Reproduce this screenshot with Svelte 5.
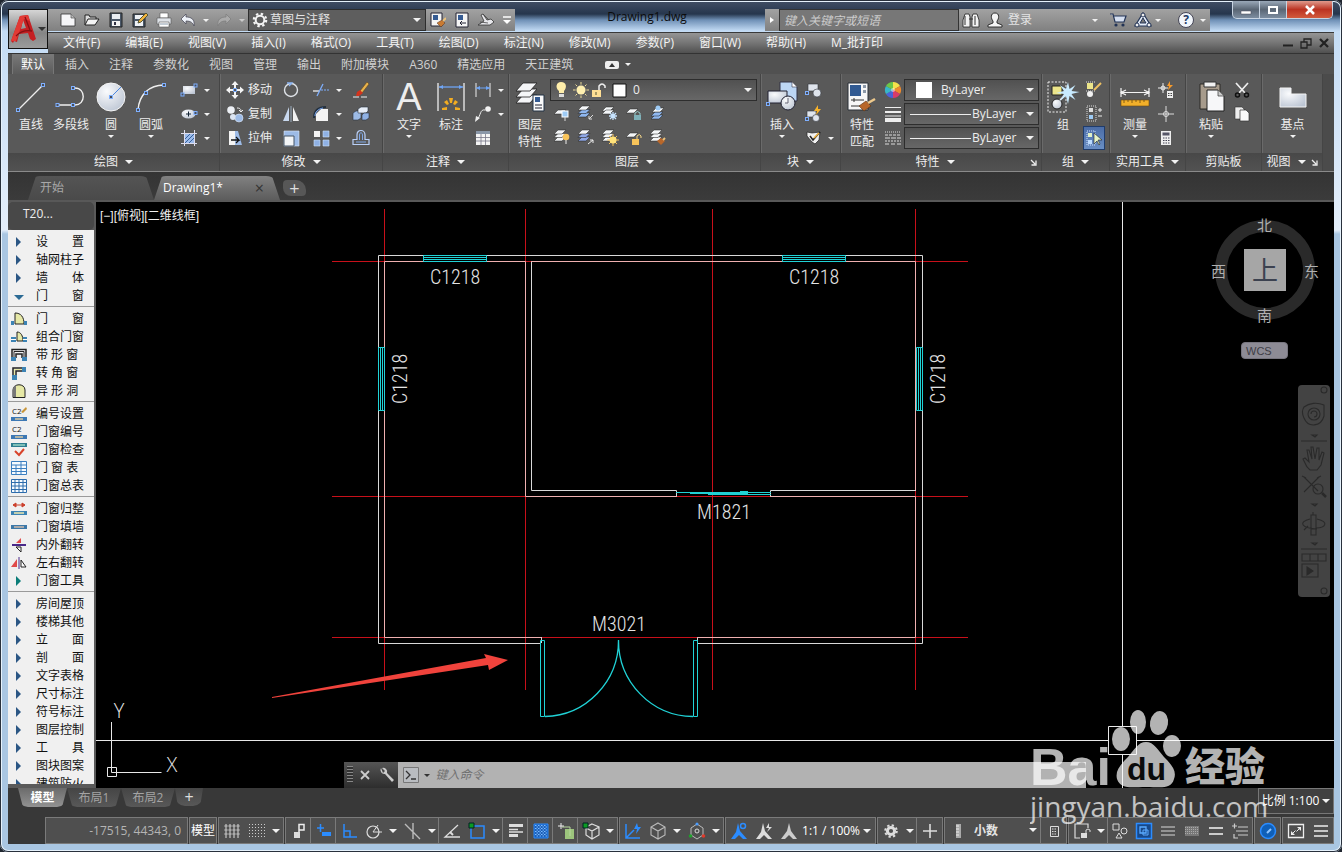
<script lang="ts">
	type Icon = [number, number, string];
	type StatusItem = {
		icon?: string;
		label?: string;
		text?: string;
		arrow?: boolean;
		units?: boolean;
		on?: boolean;
		sep?: boolean;
		tight?: boolean;
	};

	const sheet = (x: number, y: number, fill = '#f4f6f8') =>
		`<path d="M${x + 4} ${y}h8l-4 4h-8z" fill="${fill}" stroke="#222" stroke-width=".5"/>`;
	const stack = (fill = '#f4f6f8') => sheet(1, 9, fill) + sheet(1, 5.5, fill) + sheet(1, 2);
	const node = (x: number, y: number) =>
		`<rect x="${x - 1.5}" y="${y - 1.5}" width="3" height="3" fill="#4b4f58" stroke="#7fb0ff"/>`;
	const pale = 'fill="#dfe4ec" stroke="#30343a" stroke-width=".6"';

	const icons: Record<string, Icon> = {
		newfile: [16, 16, '<path d="M1 2h10l4 4v8H1z" fill="#f6f6f8" stroke="#333" stroke-width=".8"/><path d="M11 2v4h4" fill="#bbb" stroke="#555" stroke-width=".7"/>'],
		open: [16, 16, '<path d="M1 13V3h4l1 2h6v3" fill="#ddd" stroke="#222"/><path d="M1 13l3-6h11l-4 6z" fill="#f4f4f4" stroke="#222"/>'],
		save: [16, 16, '<path d="M2 1h12v14H2z" fill="#4b5869" stroke="#222"/><path d="M4 2h8v5H4z" fill="#e9edf2"/><path d="M4 9h8v5H4z" fill="#f4f4f4"/><path d="M6 10h2v3H6z" fill="#334"/>'],
		saveas: [16, 16, '<path d="M1 2h12v13H1z" fill="#4b5869" stroke="#222"/><path d="M3 3h8v4H3zM3 9h8v5H3z" fill="#eef1f5"/><path d="M6 11l1-3 7-7 2 2-7 7z" fill="#f2b43c" stroke="#553"/>'],
		print: [16, 16, '<path d="M4 1h8v5H4z" fill="#fff" stroke="#555" stroke-width=".6"/><path d="M1 6h14v6H1z" fill="#dfe3e8" stroke="#555" stroke-width=".6"/><path d="M3 10h10v5H3z" fill="#fff" stroke="#555" stroke-width=".6"/><path d="M4 12h8" stroke="#89a"/>'],
		undo: [16, 16, '<path d="M1 7l5-5v3c5 0 9 2 8 9-1-3-3-5-8-5v3z" fill="#eef2f8" stroke="#445" stroke-width=".7"/>'],
		redo: [16, 16, '<path d="M15 7l-5-5v3c-5 0-9 2-8 9 1-3 3-5 8-5v3z" fill="#aaa" stroke="#7b7b7b" stroke-width=".7"/>'],
		gear: [16, 16, '<circle cx="8" cy="8" r="4.3" fill="none" stroke="#f4f4f4" stroke-width="2"/><circle cx="8" cy="8" r="6.2" fill="none" stroke="#f4f4f4" stroke-width="2.2" stroke-dasharray="2.4 2.47"/>'],
		match: [16, 16, '<path d="M1 1h11v13H1z" fill="#f5f5f5" stroke="#223"/><path d="M3 3h5v5H3z" fill="#355b93"/><path d="M7 11l5-3 3 3-4 4z" fill="#c87a32" stroke="#532" stroke-width=".5"/><path d="M13 9l3-3" stroke="#ecc27a" stroke-width="2"/>'],
		sheetset: [16, 16, '<path d="M2 1h12v14H2z" fill="#f5f5f5" stroke="#223"/><path d="M4 3h5v5H4z" fill="#355b93"/><path d="M6 11h6M6 11l2-2M6 11l2 2" stroke="#223" fill="none"/>'],
		render: [18, 16, '<path d="M1 13h12l4-3-3-3-4 1-4-6-2 1 3 6z" fill="#e8e8ec" stroke="#333" stroke-width=".8"/><path d="M6 2l6 6M3 10l8 1" stroke="#444" stroke-width=".8"/>'],
		eject: [10, 10, '<path d="M1 2h8" stroke="#fff" stroke-width="1.5"/><path d="M1 5h8L5 9z" fill="#fff"/>'],
		binoculars: [18, 16, '<g fill="#f2f2f2" stroke="#222" stroke-width=".8"><path d="M3 2h4l1 3v10H1V8z"/><path d="M11 2h4l2 6v7h-7V5z"/></g><path d="M3 4v9M13 4v9M7 7h4" stroke="#333"/>'],
		user: [16, 16, '<path d="M8 1c5 0 4 6 2 8v2l5 2v2H1v-2l5-2V9C4 7 3 1 8 1z" fill="#f5f5f5" stroke="#222" stroke-width=".9"/>'],
		cart: [18, 16, '<path d="M1 2h3l2 8h9l2-6H5" fill="#d5dff0" stroke="#223355" stroke-width="1.2"/><circle cx="7" cy="13" r="1.6" fill="#223355"/><circle cx="14" cy="13" r="1.6" fill="#223355"/>'],
		a360: [18, 16, '<path d="M9 1l8 13H1z" fill="#e4ecf8" stroke="#223355" stroke-width="1.2"/><path d="M9 6l3 5H6z" fill="#777" stroke="#223355"/><circle cx="9" cy="3" r="2" fill="#eee" stroke="#223355"/><circle cx="3" cy="13" r="2" fill="#eee" stroke="#223355"/><circle cx="15" cy="13" r="2" fill="#eee" stroke="#223355"/>'],
		line: [32, 32, `<path d="M3 29L28 4" stroke="#eee" stroke-width="1.3"/>${node(3, 29)}${node(28, 4)}`],
		polyline: [32, 32, `<path d="M2 24h18c11 0 11-17 0-17" fill="none" stroke="#eee" stroke-width="1.4"/>${node(2.5, 24)}${node(18, 24)}${node(18, 7)}`],
		circle: [32, 32, `<circle cx="16" cy="16" r="14" fill="url(#ball)" stroke="#f4f4f4"/><path d="M16 16L26 6" stroke="#4a86e0"/>${node(16, 16)}`],
		arc: [32, 32, `<path d="M3 29C4 14 14 4 29 4" fill="none" stroke="#eee" stroke-width="1.4"/>${node(3, 29)}${node(11, 12)}${node(29, 4)}`],
		rect: [18, 16, `<path d="M3 4h12v8H3z" fill="url(#ball)"/>${node(2.5, 12.5)}${node(15.5, 3.5)}`],
		ellipse: [18, 16, `<ellipse cx="8.5" cy="8" rx="7" ry="4.5" fill="url(#ball)"/><path d="M6 8h5M8.5 5.5v5" stroke="#123"/>${node(15.5, 7)}`],
		hatch: [18, 18, '<path d="M5 5h9v9H5z" fill="#9dbcec"/><path d="M5 10l5-5M5 14l9-9M9 14l5-5" stroke="#35609c"/><path d="M1 4.5h16M1 14.5h16M4.5 1v16M14.5 1v16" stroke="#dde"/>'],
		move: [18, 18, '<g fill="#f4f4f4"><path d="M9 0l3.5 4h-2.5v3H8V4H5.5zM9 18l3.5-4h-2.5v-3H8v3H5.5zM0 9l4-3.5V8h3v2H4v2.5zM18 9l-4-3.5V8h-3v2h3v2.5z"/></g><path d="M7.5 7.5h3v3h-3z" fill="#555" stroke="#7fb0ff"/>'],
		copy: [18, 18, '<circle cx="5" cy="5" r="3.8" fill="#eef1f6"/><circle cx="7" cy="12" r="3" fill="#dbe4f2"/><circle cx="13" cy="13" r="4" fill="#9dbbe6" stroke="#dfe8f6" stroke-width=".6"/><path d="M11 3c4 0 4 2 4 4m-2-2l2 2 2-2" fill="none" stroke="#eee"/>'],
		stretch: [18, 18, '<path d="M3 2h6v14H3z" fill="#f4f4f4"/><path d="M9 2h3l4 14H9z" fill="#9dbbe6"/><path d="M5 11h8l-3-3m3 3l-3 3" fill="none" stroke="#111" stroke-width="1.3"/>'],
		rotate: [18, 18, '<circle cx="9" cy="9" r="6.5" fill="none" stroke="#dfe3e8" stroke-width="1.4"/><path d="M5 2l5 0-3 3" fill="none" stroke="#8ab4f2" stroke-width="1.3"/>'],
		mirror: [18, 18, '<path d="M7 2v14H1z" fill="#c8d8ee"/><path d="M11 2v14h6z" fill="#f1f1f1"/><path d="M9 1v16" stroke="#9ab"/>'],
		scale: [18, 18, '<path d="M2 2h15v15H2z" fill="#9dbbe6" stroke="#dde8f8" stroke-width=".6"/><path d="M2 7h10v10H2z" fill="#f2f4f6" stroke="#456"/>'],
		trim: [18, 18, '<path d="M1 10h6" stroke="#eee" stroke-width="1.3"/><path d="M9 9h8" stroke="#7fb0ff" stroke-dasharray="2 1"/><path d="M5 15L11 3" stroke="#7fb0ff" stroke-width="1.3"/>'],
		fillet: [18, 18, '<path d="M4 16V9l5-5h7v12z" fill="#f4f4f4"/><path d="M2 13C2 5 6 2 14 2" fill="none" stroke="#23303f" stroke-width="2"/><path d="M3 11c0-4 3-7 8-8" fill="none" stroke="#7fb0ff"/>'],
		array: [18, 18, '<path d="M2 2h6v6H2z" fill="#f4f4f4"/><path d="M11 2h6v6h-6zM2 11h6v6H2zM11 11h6v6h-6z" fill="#8fb1e4" stroke="#cfe0f8" stroke-width=".6"/>'],
		erase: [18, 18, '<path d="M1 16h16" stroke="#eee" stroke-dasharray="6 2"/><path d="M8 10l7-9 2 2-7 9z" fill="#e6b24c" stroke="#5a3a10" stroke-width=".5"/><path d="M4 15l1-4 3-2 3 3-4 3z" fill="#d4331c"/>'],
		explode: [18, 18, '<g stroke="#2a3442" stroke-width=".6"><path d="M1 8l3-2h5v7l-3 2H1z" fill="#9dbbe6"/><path d="M6 4l3-2h7v4l-2 2H6z" fill="#e6edf7"/><path d="M10 10l2-2h5v5l-3 2h-4z" fill="#8fb1e4"/></g>'],
		offset: [18, 18, '<path d="M1 15.5h16v-5h-4V6c0-6-8-6-8 0v4.500H1z" fill="none" stroke="#b9d0f8" stroke-width="1.2"/><path d="M4 13h10M7.500 11V6c0-3 3-3 3 0v5" fill="none" stroke="#7fa8e8"/>'],
		dimension: [32, 32, '<path d="M3 2v28M29 2v28" stroke="#eee" stroke-width="1.3"/><path d="M4 6h24" stroke="#6fa5f4" stroke-width="1.3"/><path d="M4 6l4-2v4zM28 6l-4-2v4z" fill="#6fa5f4"/><g fill="#f3ad22"><path d="M14 17h4l-1 5h-2z"/><path d="M9 21l3-2 2 4-2 1zM23 21l-3-2-2 4 2 1z"/><path d="M7 27l5-1v3H7zM25 27l-5-1v3h5z"/></g>'],
		linear: [18, 18, '<path d="M2 2v14M16 2v14" stroke="#eee"/><path d="M2 7h14" stroke="#6fa5f4"/><path d="M2 7l4-2v4zM16 7l-4-2v4z" fill="#6fa5f4"/>'],
		leader: [18, 18, '<circle cx="14" cy="4" r="2.8" fill="#f4f4f4"/><path d="M11 5C6 4 7 10 3 15" fill="none" stroke="#eee"/><path d="M1 17l1-6 4 2z" fill="#eee"/>'],
		table: [18, 18, '<path d="M2 2h14v14H2z" fill="#f4f4f4"/><path d="M2 2h14v3H2z" fill="#8a97a8"/><path d="M2 8.5h14M2 12h14M7 5v11M11.5 5v11" stroke="#778" stroke-width=".8"/>'],
		layerprops: [32, 32, '<g fill="#f5f6f8" stroke="#202020" stroke-width=".8"><path d="M9 14h14l-7 8H2z"/><path d="M9 8h14l-7 8H2z"/><path d="M9 2h14l-7 8H2z"/></g><path d="M19 14h11v16H19z" fill="#fafafa" stroke="#234"/><path d="M21 16h5v5h-5z" fill="#355b93"/><path d="M21 24h7M21 27h7" stroke="#223"/>'],
		lay1: [18, 18, sheet(1, 6) + '<rect x="9" y="7" width="6" height="6" fill="#9ecbf5" stroke="#fff"/><path d="M12 13v4" stroke="#ddd"/>'],
		lay2: [18, 18, stack('#8fb7ee') + '<path d="M16 11l-4 4m0-3v3h3" stroke="#ddd" fill="none"/>'],
		lay3: [18, 18, sheet(1, 3) + sheet(1, 6) + '<path d="M12 8v8M8 12h8M9 9l6 6M15 9l-6 6" stroke="#c7e4ff" stroke-width="1.3"/>'],
		lay4: [18, 18, sheet(1, 5) + '<path d="M9 11h7v5H9z" fill="#7eb0b8"/><path d="M10 11V9q2.5-3 5 0v2" fill="none" stroke="#9cc"/>'],
		lay5: [18, 18, sheet(2, 11, '#8fb7ee') + sheet(2, 8, '#8fb7ee') + sheet(3, 4) + '<circle cx="9" cy="4" r="2.5" fill="#9ecbf5"/>'],
		lay6: [18, 18, stack() + '<circle cx="13" cy="9" r="3.3" fill="#f8c45a"/><path d="M13 12v4" stroke="#eee"/>'],
		lay7: [18, 18, stack('#8fa7e6') + '<path d="M11 16l5-4m-3 0h3v3" stroke="#eee" fill="none"/>'],
		lay8: [18, 18, stack() + '<path d="M12 6v12M6 12h12M8 8l8 8M16 8l-8 8" stroke="#f8c45a"/><circle cx="12" cy="12" r="3.5" fill="#ffe27a"/>'],
		lay9: [18, 18, sheet(1, 5) + '<path d="M7 11h7v6H7z" fill="#f8c45a"/><path d="M12 11V8q2.5-3 4 0v2" fill="none" stroke="#f8d98a"/>'],
		lay10: [18, 18, stack() + '<path d="M8 13l4-3 4 3-4 4z" fill="#b8672a"/><path d="M14 12l2-2" stroke="#ecc27a" stroke-width="2"/>'],
		insert: [34, 34, '<path d="M15 2h12l5 5v14H15z" fill="#bcd6f4" stroke="#334"/><path d="M27 2v5h5" fill="#fff" stroke="#334" stroke-width=".6"/><path d="M3 11h19v12H3z" fill="url(#ball)" stroke="#223"/><circle cx="23" cy="23" r="7" fill="url(#ball)" stroke="#223"/><path d="M20 23h3v-5" fill="none" stroke="#667"/>' + node(3, 24)],
		block1: [18, 18, `<path d="M4 3h10v7H4z" ${pale}/><circle cx="13" cy="12" r="4" ${pale}/>${node(3, 12)}`],
		block2: [18, 18, `<path d="M3 6h9v6H3z" ${pale}/><circle cx="12" cy="13" r="3.5" ${pale}/><path d="M14 0l-4 6h3l-1 4 5-6h-3z" fill="#f8b32a"/>${node(3, 14)}`],
		block3: [18, 18, '<path d="M3 3l5 1 8-1-1 8-4 4-3-2-5-6z" fill="#f1f1f1" stroke="#222" stroke-width=".7"/><path d="M6 7l3 4 7-8" fill="none" stroke="#222" stroke-width="1.5"/><path d="M10 9l5-5" stroke="#f0b13a" stroke-width="1.5"/>'],
		matchprops: [32, 32, '<path d="M2 2h20v27H2z" fill="#f7f7f7" stroke="#2b3038"/><path d="M4 4h11v11H4z" fill="#315a92"/><path d="M17 4h3v3h-3zM17 9h3v3h-3z" fill="#8b98a8"/><path d="M5 19h13M5 25h9M8 17v4" stroke="#333"/><path d="M13 25l7-5 5 5-7 5z" fill="#b8672a" stroke="#5a3210" stroke-width=".6"/><path d="M22 22l7-4" stroke="#eec98c" stroke-width="2.5"/>'],
		colorwheel: [18, 18, '<path d="M9 9V1a8 8 0 0 1 7 4z" fill="#f6e24a"/><path d="M9 9l7-4a8 8 0 0 1 0 8z" fill="#ef8a2c"/><path d="M9 9l7 4a8 8 0 0 1-7 4z" fill="#d93b6a"/><path d="M9 9v8a8 8 0 0 1-7-4z" fill="#4a62d8"/><path d="M9 9l-7 4a8 8 0 0 1 0-8z" fill="#38b6c8"/><path d="M9 9L2 5a8 8 0 0 1 7-4z" fill="#6cc648"/><circle cx="9" cy="9" r="2" fill="#fff" opacity=".5"/>'],
		weights: [18, 18, '<path d="M1 2.5h16M1 11h16" stroke="#eee"/><path d="M1 7h16" stroke="#eee" stroke-width="2"/><path d="M1 15h16" stroke="#eee" stroke-width="4"/>'],
		dashes: [18, 18, '<path d="M1 3h16" stroke="#ddd" stroke-dasharray="1 1"/><path d="M1 6h16" stroke="#ddd" stroke-dasharray="3 1"/><path d="M1 9h16" stroke="#ddd" stroke-dasharray="5 1"/><path d="M1 12h16" stroke="#ddd" stroke-dasharray="2 1"/><path d="M1 15h16" stroke="#ddd" stroke-dasharray="4 2"/>'],
		group: [34, 34, '<path d="M2 2h18v30H2z" fill="none" stroke="#eee" stroke-dasharray="2 1.5"/><path d="M6 6h10v9H6z" fill="#ece58a" stroke="#222"/><circle cx="11" cy="24" r="5" fill="url(#ball)" stroke="#222"/><path d="M14 20l6-6" stroke="#eee" stroke-width="1.5"/><path d="M22 2l1.5 7 6-4-4 6 8 1-8 2 4 6-6-4-1.5 8-2-8-6 5 4-7-8-1 8-2-4-6 6 4z" fill="#c8ebff"/>'],
		groupedit: [18, 18, '<path d="M2 2h6v6H2z" fill="#ece58a"/><circle cx="5" cy="13" r="3" fill="#f2f2f2"/><path d="M1 1h9M1 10h9" stroke="#ddd" stroke-dasharray="1 1"/><path d="M9 9l7-7" stroke="#eec163" stroke-width="2"/>'],
		ungroup: [18, 18, '<path d="M2 1h9v15H2z" fill="none" stroke="#ddd" stroke-dasharray="1 1"/><path d="M4 3h4v4H4z" fill="#ddd"/><path d="M4 10h4v4H4z" fill="#9ecbf5"/><path d="M13 5h4M15 3v4M13 11h4" stroke="#eee"/>'],
		groupsel: [18, 18, '<path d="M2 2h8v14H2z" fill="none" stroke="#cfe0ff" stroke-dasharray="1 1"/><path d="M3 4h4v4H3z" fill="#dff0c8"/><path d="M3 11h4v4H3z" fill="#bcdcff"/><path d="M9 4v11l3-3 2 4 1-1-2-4h4z" fill="#e6f4c8" stroke="#222" stroke-width=".6"/>'],
		measure: [34, 34, '<path d="M3 8v9M31 8v9M3 12.5h28M8 10l-5 2.5L8 15M26 10l5 2.5L26 15" fill="none" stroke="#f4f4f4" stroke-width="1.2"/><path d="M3 20h28v6H3z" fill="#f2b02a" stroke="#6b4a10" stroke-width=".6"/><path d="M6 20v3M10 20v2M14 20v3M18 20v2M22 20v3M26 20v2" stroke="#6b4a10" stroke-width=".8"/>'],
		quickcalc: [18, 18, '<path d="M1 7h10M6 2v10" stroke="#eee"/><circle cx="6" cy="7" r="2" fill="none" stroke="#eee"/><path d="M13 0l-3 5h2l-1 4 5-5h-3z" fill="#f89a2a"/><path d="M10 10h6v7h-6z" fill="#eee"/><path d="M11 12.5h4M11 14.5h4" stroke="#444" stroke-dasharray="1 .5"/>'],
		point: [18, 18, '<path d="M9 1v16M1 9h16" stroke="#ddd"/><circle cx="9" cy="9" r="2.5" fill="none" stroke="#ddd"/>'],
		calc: [18, 18, '<path d="M4 2h10v14H4z" fill="#eee"/><path d="M5.5 3.5h7v3h-7z" fill="#556"/><path d="M6 9h7M6 11.5h7M6 14h7" stroke="#445" stroke-dasharray="1.5 1"/>'],
		paste: [34, 34, '<path d="M6 4h20v25H6z" fill="#a79b8c" stroke="#2d2a26"/><path d="M10 2h12v5H10z" fill="#f1f1f1" stroke="#333"/><path d="M13 10h11l6 6v15H13z" fill="#f7f7f9" stroke="#222"/><path d="M24 10v6h6" fill="#ccc" stroke="#333" stroke-width=".7"/>'],
		cut: [18, 18, '<path d="M3 2l9 10M15 2L6 12" stroke="#eee" stroke-width="1.7"/><circle cx="4.5" cy="14" r="2" fill="none" stroke="#111" stroke-width="1.5"/><circle cx="13.5" cy="14" r="2" fill="none" stroke="#111" stroke-width="1.5"/>'],
		copyclip: [18, 18, '<path d="M2 2h7l2 2v10H2z" fill="#eee" stroke="#333" stroke-width=".6"/><path d="M7 5h6l3 3v8H7z" fill="#fafafa" stroke="#333" stroke-width=".7"/>'],
		base: [34, 34, '<path d="M4 8h11v6h15v13H4z" fill="url(#ball)" stroke="#f4f4f4"/>'],
		right: [16, 14, '<path d="M5 2l5 5-5 5z" fill="#2b5684"/>'],
		teal: [16, 14, '<path d="M5 2l5 5-5 5z" fill="#0b7d78"/>'],
		down: [16, 14, '<path d="M3 6h10l-5 5z" fill="#2b6a94"/>'],
		door: [16, 14, '<path d="M4 12V1c6 0 9 4 9 11z" fill="#e6e8a6" stroke="#222"/><path d="M0 9h3v4H0zM13 9h3v4h-3z" fill="#3c83b4"/>'],
		combo: [16, 14, '<path d="M6 11V2c4 0 6 4 6 9z" fill="#e6e8a6" stroke="#222"/><path d="M0 7h5v5H0zM12 7h4v5h-4z" fill="#3c83b4"/><path d="M0 9.5h5M12 9.5h4" stroke="#fff"/>'],
		strip: [16, 14, '<path d="M1 10V1.500h14V10M5 10V6h6v4" fill="none" stroke="#222" stroke-width="1.5"/><path d="M3 10V3.500h10V10" fill="none" stroke="#222"/><path d="M0 9h5v4H0zM11 9h5v4h-5z" fill="#3c83b4"/>'],
		corner: [16, 14, '<path d="M2 9V2h9M5 9V5h6" fill="none" stroke="#222" stroke-width="1.5"/><path d="M3.5 9V3.5H11" fill="none" stroke="#e6e8a6"/><path d="M1 9h5v5H1zM11 1h4v5h-4z" fill="#3c83b4"/>'],
		niche: [16, 14, '<path d="M2 13.5V6c0-7 12-7 12 0v7.5z" fill="#e6e8a6" stroke="#222"/><path d="M2 13V6c0-3 1-4 3-5v12z" fill="#777"/>'],
		c2edit: [16, 14, '<path d="M0 10h16v4H0z" fill="#3c78b4"/><path d="M4 12h8" stroke="#d9c8a0" stroke-width="1.5"/><path d="M10 5l5-5 1 2-4 4z" fill="#c89438"/>'],
		c2: [16, 14, '<path d="M0 10h16v4H0z" fill="#3c78b4"/><path d="M4 12h8" stroke="#d9c8a0" stroke-width="1.5"/>'],
		check: [16, 14, '<path d="M0 0h16v4H0z" fill="#2c7c90"/><path d="M2 2h12" stroke="#cfd"/><path d="M4 8l4 4 5-6" fill="none" stroke="#d8432a" stroke-width="2"/>'],
		grid1: [16, 14, '<path d="M.5.5h15v13H.5z" fill="#f6fbff" stroke="#3b7fc0"/><path d="M0 4h16M0 7.5h16M0 10.5h16M5 4v10M10 0v14" stroke="#3b7fc0"/>'],
		grid2: [16, 14, '<path d="M.5.5h15v13H.5z" fill="#f6fbff" stroke="#2d6cac"/><path d="M0 3.5h16M0 7h16M0 10.5h16M4 0v14M8 0v14M12 0v14" stroke="#2d6cac"/>'],
		align: [16, 14, '<path d="M2 3h12M2 3l3-2v4zM14 3l-3-2v4z" stroke="#cc402c" fill="#cc402c"/><path d="M0 9h16v4H0z" fill="#3c83b4"/><path d="M3 11h10" stroke="#efe9b0" stroke-width="1.5"/>'],
		fill: [16, 14, '<path d="M0 5h16v4H0z" fill="#3c78a8"/><path d="M3 7h10" stroke="#aaa" stroke-width="2"/>'],
		flipv: [16, 14, '<path d="M10 0v5H5z" fill="#e04a4a"/><path d="M1 7h14" stroke="#4a2a8a" stroke-width="2"/><path d="M5 9h5v5z" fill="#fff" stroke="#222"/>'],
		fliph: [16, 14, '<path d="M6 3v8H0z" fill="#e04a4a"/><path d="M8 1v12" stroke="#4a2a8a"/><path d="M10 4v7h5z" fill="#fff" stroke="#222"/>'],
		sgrid: [18, 18, '<path d="M3 2v14M7 2v14M11 2v14M15 2v14" stroke="#ddd"/><path d="M1 4h16M1 8h16M1 12h16" stroke="#ddd" stroke-width=".6"/>'],
		sdots: [18, 18, '<path d="M1 2.500h16M1 5.500h16M1 8.500h16M1 11.500h16M1 14.500h16" stroke="#ccc" stroke-dasharray="1 2"/>'],
		infer: [18, 18, '<path d="M9 10V2.500h5V8H9" fill="none" stroke="#eee" stroke-width="1.5"/><path d="M4 10h6v6H4z" fill="#ddd"/>'],
		dyn: [18, 18, '<path d="M2 6h7M5.5 2v8" stroke="#2b8cff" stroke-width="1.5"/><path d="M7 10h9v4H7z" fill="#2b8cff"/>'],
		ortho: [18, 18, '<path d="M4 2v13h13M4 9h6v6" fill="none" stroke="#2b8cff" stroke-width="1.5"/>'],
		polar: [18, 18, '<circle cx="8" cy="10" r="6" fill="none" stroke="#ddd" stroke-width="1.2"/><path d="M8 10l5-7M8 10h9" stroke="#ddd"/>'],
		iso: [18, 18, '<path d="M9 1v16M1 2l15 15" stroke="#bbb" stroke-width="1.4"/>'],
		track: [18, 18, '<path d="M17 15H2L15 3" fill="none" stroke="#ddd" stroke-width="1.3"/><path d="M7 10l3 3" stroke="#ddd" stroke-width="2"/>'],
		osnap: [18, 18, '<path d="M3 4h13v12H3z" fill="none" stroke="#2b8cff" stroke-width="1.5"/><path d="M1 1h5v5H1z" fill="#0b9b22" stroke="#022"/>'],
		lwt: [18, 18, '<path d="M2 3.500h14M2 13.500h9" stroke="#ddd" stroke-width="3"/><path d="M2 7.500h9M2 10h14" stroke="#ddd" stroke-width="1.5"/>'],
		transp: [18, 18, '<path d="M2 2h14v14H2z" fill="#1b5fb8" stroke="#2b8cff"/><path d="M3 3.500h12M3 6.500h12M3 9.500h12M3 12.500h12" stroke="#7cbcff" stroke-dasharray="1.5 1.5"/><path d="M4.500 5h12M4.500 8h12M4.500 11h12M4.500 14h12" stroke="#7cbcff" stroke-dasharray="1.5 1.5"/>'],
		cycle: [18, 18, '<path d="M8 7h9v10H8z" fill="#9cc47c"/><path d="M5 5h8v9" fill="none" stroke="#b8d8a0"/><path d="M4 1v6M1 4h6" stroke="#eee"/>'],
		cube: [18, 18, '<path d="M9 1l7 4v8l-7 4-7-4V5zM2 5l7 4 7-4M9 9v8" fill="none" stroke="#bbb" stroke-width="1.1"/>'],
		osnap3: [18, 18, '<path d="M10 2l7 3v8l-7 4-6-4V5zM4 6l6 3 7-4M10 9v8" fill="none" stroke="#ddd" stroke-width="1.2"/><path d="M1 1h5v5H1z" fill="#0b9b22" stroke="#022"/>'],
		ucs: [18, 18, '<path d="M2 2v14h14M2 16l8-8" fill="none" stroke="#2b8cff" stroke-width="1.5"/><path d="M13 1l-3 6h3l-1 5 5-7h-3z" fill="#2b8cff"/>'],
		filter: [18, 18, '<path d="M9 2l6 4v7l-6 4-6-4V6z" fill="none" stroke="#bbb"/><circle cx="9" cy="9" r="2" fill="none" stroke="#ddd"/><circle cx="9" cy="2" r="1.5" fill="#4a9cff"/><circle cx="2.5" cy="14" r="1.8" fill="#1fa22b"/><circle cx="15.5" cy="14" r="1.8" fill="#e03a2a"/>'],
		annov: [18, 18, '<path d="M8 1l2 8 7 8h-4l-4-4-4 4H1l5-7z" fill="#2b8cff"/><circle cx="13" cy="4" r="2.5" fill="none" stroke="#2b8cff" stroke-width="1.5"/>'],
		annoa: [18, 18, '<path d="M8 1l2 8 7 8h-4l-4-4-4 4H1l5-7z" fill="#ddd"/><path d="M14 1l-3 5h3l-2 4 5-5h-3z" fill="#ddd"/>'],
		anno: [18, 18, '<path d="M9 1l2 8 6 8h-4l-4-4-4 4H1l6-8z" fill="#ccc"/>'],
		cog: [18, 18, '<circle cx="9" cy="9" r="3.6" fill="none" stroke="#ddd" stroke-width="3"/><circle cx="9" cy="9" r="5.8" fill="none" stroke="#ddd" stroke-width="2" stroke-dasharray="2.3 2.25"/>'],
		plus: [18, 18, '<path d="M9 2v14M2 9h14" stroke="#ddd" stroke-width="1.6"/>'],
		ruler: [18, 18, '<path d="M7 2h5v14H7z" fill="#aaa"/><path d="M7 4h3M7 7h3M7 10h3M7 13h3" stroke="#eee"/>'],
		quick: [18, 18, '<path d="M5.5 4.5h8v10h-8z" fill="none" stroke="#ddd"/><path d="M7 7h5M7 9.5h5M7 12h5" stroke="#ddd" stroke-dasharray="1.5 1"/>'],
		lock: [18, 18, '<path d="M2 8V2h13v4M2 8v8h5" fill="none" stroke="#ddd" stroke-width="1.2"/><path d="M8 11h6v5H8z" fill="#ddd"/><path d="M13 11V8q2-2 4 0v2" fill="none" stroke="#ddd"/>'],
		shapes: [18, 18, '<path d="M2 2h6v6H2zM8 11l3 5H5z" fill="none" stroke="#ddd"/><circle cx="13" cy="9" r="3" fill="none" stroke="#ddd"/>'],
		isolate: [18, 18, '<path d="M1.5 1.5h15v15h-15z" fill="#18498a" stroke="#2b8cff" stroke-width="1.5"/><path d="M5 5h6v6H5z" fill="none" stroke="#5aaaff" stroke-width="1.3"/><path d="M8 8h5v5H8z" fill="none" stroke="#5aaaff"/>'],
		lines3: [18, 18, '<path d="M2 5h14M2 9h14M2 13h14" stroke="#aaa" stroke-width="1.5"/>'],
		shade: [18, 18, '<path d="M2 4h14v10H2z" fill="#777"/><path d="M2 5.500h14M2 7.500h14M2 9.500h14M2 11.500h14" stroke="#aaa" stroke-dasharray="1 1"/>'],
		lines2: [18, 18, '<path d="M2 6h14M2 12h14" stroke="#ccc" stroke-width="2"/>'],
		lineadd: [18, 18, '<path d="M1 4h5M3.5 1.5v5M7 5h10M5 9h12M7 13h10M3 12v4h4" fill="none" stroke="#ccc" stroke-width="1.2"/>'],
		perf: [18, 18, '<circle cx="9" cy="9" r="7.5" fill="#0f5fb8" stroke="#2b8cff" stroke-width="1.5"/><path d="M8 11l4-4" stroke="#8fc4ff" stroke-width="2"/>'],
		full: [18, 18, '<path d="M1.5 2.5h15v13h-15z" fill="none" stroke="#eee" stroke-width="1.3"/><path d="M10 5h4v4zM4 9v4h4z" fill="#eee"/><path d="M12 7L9.500 9.500M6 11l2.500-2.500" stroke="#eee"/>'],
		menu: [18, 18, '<path d="M2 4h14M2 9h14M2 14h14" stroke="#eee" stroke-width="1.6"/>'],
		wrench: [18, 18, '<path d="M3 2a4 4 0 0 0 4 6l7 8 2-2-7-7a4 4 0 0 0-5-5l3 3-2 2z" fill="#ccc"/>'],
		prompt: [18, 18, '<path d="M1.5 1.5h15v15h-15z" fill="#b9bcc0" stroke="#777"/><path d="M4 5l4 4-4 4M9 13h5" fill="none" stroke="#333" stroke-width="1.3"/>']
	};

	const quickFiles = [
		['newfile', '新建'],
		['open', '打开'],
		['save', '保存'],
		['saveas', '另存为'],
		['print', '打印'],
		['undo', '放弃']
	];
	const menus = ['文件(F)', '编辑(E)', '视图(V)', '插入(I)', '格式(O)', '工具(T)', '绘图(D)', '标注(N)', '修改(M)', '参数(P)', '窗口(W)', '帮助(H)', 'M_批打印'];
	const ribbonTabs = ['默认', '插入', '注释', '参数化', '视图', '管理', '输出', '附加模块', 'A360', '精选应用', '天正建筑'];
	const layerTools = ['关闭', '图层隔离', '冻结', '锁定', '置为当前', '打开所有图层', '取消隔离', '解冻所有图层', '解锁', '匹配图层'];

	const palette: [string, string][][] = [
		[['right', '设　　置'], ['right', '轴网柱子'], ['right', '墙　　体'], ['down', '门　　窗']],
		[['door', '门　　窗'], ['combo', '组合门窗'], ['strip', '带 形 窗'], ['corner', '转 角 窗'], ['niche', '异 形 洞']],
		[['c2edit', '编号设置'], ['c2', '门窗编号'], ['check', '门窗检查'], ['grid1', '门 窗 表'], ['grid2', '门窗总表']],
		[['align', '门窗归整'], ['fill', '门窗填墙'], ['flipv', '内外翻转'], ['fliph', '左右翻转'], ['teal', '门窗工具']],
		[
			['right', '房间屋顶'], ['right', '楼梯其他'], ['right', '立　　面'], ['right', '剖　　面'], ['right', '文字表格'], ['right', '尺寸标注'],
			['right', '符号标注'], ['right', '图层控制'], ['right', '工　　具'], ['right', '图块图案'], ['right', '建筑防火']
		]
	];

	const status: StatusItem[][] = [
		[{ text: '模型' }],
		[{ icon: 'sgrid', label: '栅格' }, { icon: 'sdots', label: '捕捉', arrow: true }],
		[
			{ icon: 'infer', label: '推断约束' },
			{ icon: 'dyn', label: '动态输入', on: true, sep: true },
			{ icon: 'ortho', label: '正交', on: true, sep: true },
			{ icon: 'polar', label: '极轴追踪', arrow: true },
			{ icon: 'iso', label: '等轴测', arrow: true },
			{ icon: 'track', label: '对象捕捉追踪', sep: true },
			{ icon: 'osnap', label: '对象捕捉', arrow: true, on: true },
			{ icon: 'lwt', label: '线宽', sep: true },
			{ icon: 'transp', label: '透明度', sep: true, on: true },
			{ icon: 'cycle', label: '选择循环', sep: true },
			{ icon: 'osnap3', label: '三维对象捕捉', arrow: true, sep: true }
		],
		[{ icon: 'ucs', label: '动态 UCS', on: true }, { icon: 'cube', label: '选择过滤', arrow: true }, { icon: 'filter', label: '小控件', arrow: true }],
		[{ icon: 'annov', label: '注释可见性', on: true }, { icon: 'annoa', label: '自动缩放' }, { icon: 'anno', label: '注释比例' }, { text: '1:1 / 100%', arrow: true }],
		[{ icon: 'cog', label: '切换工作空间', arrow: true }, { icon: 'plus', label: '注释监视器', sep: true }],
		[{ icon: 'ruler', label: '单位' }, { units: true }, { icon: 'quick', label: '快捷特性', sep: true }],
		[
			{ icon: 'lock', label: '锁定用户界面', arrow: true },
			{ icon: 'shapes', label: '隔离对象', sep: true, tight: true },
			{ icon: 'isolate', label: '基线', tight: true },
			{ icon: 'lines3', label: '填充', tight: true },
			{ icon: 'shade', label: '加粗', tight: true },
			{ icon: 'lines2', label: '动态标注', tight: true },
			{ icon: 'lineadd', label: '编组', tight: true }
		],
		[{ icon: 'perf', label: '硬件加速' }],
		[{ icon: 'full', label: '全屏显示' }, { icon: 'menu', label: '自定义' }]
	];

	let activeTab = $state('默认');
	let command = $state('');
	let search = $state('');
</script>

{#snippet icon(name: string)}
	{@const [w, h, body] = icons[name]}
	<svg class="icon" width={w} height={h} viewBox="0 0 {w} {h}" aria-hidden="true">{@html body}</svg>
{/snippet}

{#snippet big(name: string, label: string, arrow = false, second = '')}
	<button class="big">
		{#if name === 'text'}<span class="letter" aria-hidden="true">A</span>{:else}<span class="pic">{@render icon(name)}</span>{/if}
		<span>{label}</span>
		{#if second}<span>{second}</span>{/if}
		{#if arrow}<i class="caret small"></i>{/if}
	</button>
{/snippet}

{#snippet tool(name: string, title: string, arrow = false, label = '')}
	<button class="tool" {title} aria-label={title}>
		<span class="pic">{@render icon(name)}</span>
		{#if label}<span class="label">{label}</span>{/if}
		{#if arrow}<i class="caret small"></i>{/if}
	</button>
{/snippet}

{#snippet foot(label: string, arrow = true, launcher = false)}
	<h2 class="foot" class:with-launcher={launcher}>
		<span>{label}</span>
		{#if arrow}<i class="caret"></i>{/if}
		{#if launcher}<svg class="launcher" width="7" height="7" viewBox="0 0 7 7" aria-hidden="true"><path d="M1 1l4 4M6 1.5V6H1.5" fill="none" stroke="#eee" stroke-width="1.3" /></svg>{/if}
	</h2>
{/snippet}

<svg class="defs" width="0" height="0" aria-hidden="true">
	<defs>
		<radialGradient id="ball" cx=".35" cy=".3" r=".8">
			<stop offset="0" stop-color="#fafbfd" />
			<stop offset="1" stop-color="#bcc5d3" />
		</radialGradient>
	</defs>
</svg>

<div class="window">
	<header class="header">
		<button class="app-button" aria-label="应用程序菜单">
			<svg width="26" height="30" viewBox="0 0 26 30" aria-hidden="true">
				<path fill-rule="evenodd" d="M0 27L9 2l8-1 8 24-3 2-3-2-2-6-9 1-2 8-3-1-1 2zM10 15l5-1-3-8z" fill="#c51f22" />
				<path d="M9 2l8-1 2 6-6-2-8 22-5 0z" fill="#e23a35" />
				<path d="M5 22c5-5 10-6 16-5M14 3l5 13" fill="none" stroke="#861014" stroke-width="1.3" />
			</svg>
			<i class="caret dark"></i>
		</button>

		<div class="titlebar">
			<div class="quick">
				{#each quickFiles as [name, title]}
					<button {title} aria-label={title}>{@render icon(name)}</button>
				{/each}
				<i class="caret small quick-arrow"></i>
				<button aria-label="重做">{@render icon('redo')}</button>
				<i class="caret small quick-arrow faded"></i>
				<div class="combo workspace">
					{@render icon('gear')}
					<select aria-label="工作空间"><option>草图与注释</option></select>
				</div>
				<button aria-label="特性匹配">{@render icon('match')}</button>
				<button aria-label="图纸集">{@render icon('sheetset')}</button>
				<button aria-label="渲染">{@render icon('render')}</button>
				<button class="narrow" aria-label="自定义快速访问工具栏">{@render icon('eject')}</button>
			</div>
			<h1>Drawing1.dwg</h1>
			<div class="info">
				<i class="play"></i>
				<input bind:value={search} placeholder="键入关键字或短语" aria-label="搜索" />
				<button aria-label="查找">{@render icon('binoculars')}</button>
				<button class="login">{@render icon('user')}<span>登录</span><i class="caret small"></i></button>
				<button aria-label="应用商店">{@render icon('cart')}</button>
				<button class="with-arrow" aria-label="保持连接">{@render icon('a360')}<i class="caret small"></i></button>
				<button class="help" aria-label="帮助"><span>?</span><i class="caret small"></i></button>
			</div>
			<div class="controls">
				<button aria-label="最小化"><svg width="12" height="10" viewBox="0 0 12 10"><path d="M1 6h10v3H1z" fill="#fff" stroke="#445" stroke-width=".5" /></svg></button>
				<button aria-label="最大化"><svg width="12" height="10" viewBox="0 0 12 10"><path d="M2 2h8v6H2z" fill="none" stroke="#fff" stroke-width="2" /></svg></button>
				<button class="close" aria-label="关闭"><svg width="12" height="10" viewBox="0 0 12 10"><path d="M2 1l8 8M10 1L2 9" stroke="#fff" stroke-width="2.5" /></svg></button>
			</div>
		</div>

		<nav class="menubar" aria-label="菜单栏">
			{#each menus as item}<button>{item}</button>{/each}
			<div class="doc-controls">
				<button aria-label="最小化图形"><svg width="12" height="12" viewBox="0 0 12 12"><path d="M1 8.5h10" stroke="#222" stroke-width="2" /></svg></button>
				<button aria-label="还原图形"><svg width="12" height="12" viewBox="0 0 12 12"><path d="M1 5h6v6H1zM4 5V2h7v6H7" fill="none" stroke="#222" stroke-width="1.3" /></svg></button>
				<button aria-label="关闭图形"><svg width="12" height="12" viewBox="0 0 12 12"><path d="M2 2l8 8M10 2l-8 8" stroke="#222" stroke-width="2.3" /></svg></button>
			</div>
		</nav>
	</header>

	<nav class="ribbon-tabs" aria-label="功能区选项卡">
		{#each ribbonTabs as tab}
			<button class:active={activeTab === tab} onclick={() => (activeTab = tab)}>{tab}</button>
		{/each}
		<button class="minimize" aria-label="最小化功能区">
			<svg width="14" height="8" viewBox="0 0 14 8" aria-hidden="true"><rect width="14" height="8" rx="2" fill="#eee" /><path d="M4 6l3-4 3 4z" fill="#333" /></svg>
			<i class="caret small"></i>
		</button>
	</nav>

	<div class="ribbon">
		<section class="panel">
			<div class="body draw">
				{@render big('line', '直线')}
				{@render big('polyline', '多段线')}
				{@render big('circle', '圆', true)}
				{@render big('arc', '圆弧', true)}
				<div class="col">
					{@render tool('rect', '矩形', true)}
					{@render tool('ellipse', '椭圆', true)}
					{@render tool('hatch', '图案填充', true)}
				</div>
			</div>
			{@render foot('绘图')}
		</section>
		<section class="panel">
			<div class="body modify">
				<div class="col">
					{@render tool('move', '移动', false, '移动')}
					{@render tool('copy', '复制', false, '复制')}
					{@render tool('stretch', '拉伸', false, '拉伸')}
				</div>
				<div class="col">
					{@render tool('rotate', '旋转')}
					{@render tool('mirror', '镜像')}
					{@render tool('scale', '缩放')}
				</div>
				<div class="col">
					{@render tool('trim', '修剪', true)}
					{@render tool('fillet', '圆角', true)}
					{@render tool('array', '阵列', true)}
				</div>
				<div class="col">
					{@render tool('erase', '删除')}
					{@render tool('explode', '分解')}
					{@render tool('offset', '偏移')}
				</div>
			</div>
			{@render foot('修改')}
		</section>
		<section class="panel">
			<div class="body annotate">
				{@render big('text', '文字', true)}
				{@render big('dimension', '标注')}
				<div class="col">
					{@render tool('linear', '线性', true)}
					{@render tool('leader', '引线', true)}
					{@render tool('table', '表格')}
				</div>
			</div>
			{@render foot('注释')}
		</section>
		<section class="panel">
			<div class="body">
				{@render big('layerprops', '图层', false, '特性')}
				<div class="layers">
					<div class="combo layer">
						<svg width="76" height="18" viewBox="0 0 76 18" aria-hidden="true">
							<path d="M7 1c6 0 6 6 3 9v2H5v-2C1 7 2 1 7 1z" fill="#ffeeaa" />
							<path d="M5 13h5v3H5z" fill="#ddd" />
							<path d="M27 1v16M19 9h16M21.5 3.5l11 11M32.5 3.5l-11 11" stroke="#ecdc98" />
							<circle cx="27" cy="9" r="5.5" fill="#606060" />
							<circle cx="27" cy="9" r="4.5" fill="#fff0b0" />
							<path d="M38 9h9v7h-9z" fill="#ffdf94" />
							<path d="M45 9V5q3-4 6 0v2" fill="none" stroke="#eee" stroke-width="1.5" />
							<path d="M42 11v3" stroke="#553" />
							<path d="M59 3h13v13H59z" fill="#fff" stroke="#111" />
						</svg>
						<select aria-label="图层"><option>0</option></select>
					</div>
					<div class="layer-grid">
						{#each layerTools as title, i}
							<button {title} aria-label={title}>{@render icon(`lay${i + 1}`)}</button>
						{/each}
					</div>
				</div>
			</div>
			{@render foot('图层')}
		</section>
		<section class="panel">
			<div class="body">
				{@render big('insert', '插入', true)}
				<div class="col">
					{@render tool('block1', '创建块')}
					{@render tool('block2', '块编辑器')}
					{@render tool('block3', '编辑属性', true)}
				</div>
			</div>
			{@render foot('块')}
		</section>
		<section class="panel">
			<div class="body">
				{@render big('matchprops', '特性', false, '匹配')}
				<div class="col">
					{@render tool('colorwheel', '对象颜色')}
					{@render tool('weights', '线宽')}
					{@render tool('dashes', '线型')}
				</div>
				<div class="bylayer">
					<div class="combo"><span class="swatch"></span><select aria-label="对象颜色"><option>ByLayer</option></select></div>
					<div class="combo"><span class="sample"></span><select aria-label="线宽"><option>ByLayer</option></select></div>
					<div class="combo"><span class="sample"></span><select aria-label="线型"><option>ByLayer</option></select></div>
				</div>
			</div>
			{@render foot('特性', true, true)}
		</section>
		<section class="panel">
			<div class="body">
				{@render big('group', '组')}
				<div class="col">
					{@render tool('groupedit', '组编辑')}
					{@render tool('ungroup', '解除编组')}
					<div class="pressed">{@render tool('groupsel', '启用/禁用组选择')}</div>
				</div>
			</div>
			{@render foot('组')}
		</section>
		<section class="panel">
			<div class="body roomy">
				{@render big('measure', '测量', true)}
				<div class="col">
					{@render tool('quickcalc', '快速选择')}
					{@render tool('point', '点坐标')}
					{@render tool('calc', '快速计算器')}
				</div>
			</div>
			{@render foot('实用工具')}
		</section>
		<section class="panel">
			<div class="body roomy">
				{@render big('paste', '粘贴', true)}
				<div class="col">
					{@render tool('cut', '剪切')}
					{@render tool('copyclip', '复制剪裁')}
				</div>
			</div>
			{@render foot('剪贴板', false)}
		</section>
		<section class="panel">
			<div class="body view">{@render big('base', '基点', true)}</div>
			{@render foot('视图', true, true)}
		</section>
		<div class="rest"></div>
	</div>

	<div class="file-tabs">
		<button class="file-tab">开始</button>
		<button class="file-tab current">Drawing1* <span class="x">×</span></button>
		<button class="add-tab" aria-label="新图形">+</button>
	</div>

	<main class="workspace-area">
		<aside class="palette">
			<h2>T20...</h2>
			<div class="palette-list">
				{#each palette as section}
					<ul>
						{#each section as [name, label]}
							<li>
								<button>
									<span class="pic">
										{#if name.startsWith('c2')}<small aria-hidden="true">C2</small>{/if}
										{@render icon(name)}
									</span>
									<span class="label">{label}</span>
								</button>
							</li>
						{/each}
					</ul>
				{/each}
			</div>
		</aside>

		<div class="canvas">
			<svg class="plan" width="100%" height="100%" role="img" aria-label="平面图">
				<g transform="translate(-96 -202)" fill="none">
					<g stroke="#c8101a">
						<path d="M384.5 209V690M525.5 209V690M712.5 209V690M915.5 209V690" />
						<path d="M332 261.5H968M332 496.5H968M332 637.5H968" />
					</g>
					<path d="M541 643.5H378.5V255.5H922.5V643.5H697M531.5 262V490.5H676.5V496M770.5 496V490.5H916M541.5 637V643M697.5 637V643" stroke="#d8d8d8" />
					<path d="M541 637.5H384.5V261.5H525.5V496.5H677M770 496.5H915.5V637.5H697M531 261.5H915.5V490" stroke="#efb0b0" />
					<g stroke="#20d2d6">
						<path d="M423.5 255.5h63v6h-63zM423 257.5h64M423 259.5h64" />
						<path d="M782.5 255.5h63v6h-63zM783 257.5h63M783 259.5h63" />
						<path d="M378.5 347.5v63h6v-63zM380.5 347v64M382.5 347v64" />
						<path d="M916.5 347.5v63h6v-63zM918.5 347v64M920.5 347v64" />
						<path d="M676 492.5h95M708 494.5h63M690 493.5h58M740 491.5h8" />
						<path d="M540.5 640.5v76h4v-76zM693.5 640.5v76h4v-76z" />
						<path d="M618.5 640A75 76 0 0 1 545 716.5M618.5 640A75 76 0 0 0 693 716.5" stroke-width="1.3" />
					</g>
				</g>
				<g transform="translate(-96 -202)">
					<path d="M272 697L486 658l-2-4 24 6-19 10-1-5L272 698z" fill="#f0433c" />
					<g class="cad">
						<text x="455" y="284">C1218</text>
						<text x="814" y="284">C1218</text>
						<text x="724" y="519">M1821</text>
						<text x="619" y="631">M3021</text>
						<text transform="translate(407 379) rotate(-90)">C1218</text>
						<text transform="translate(945 379) rotate(-90)">C1218</text>
					</g>
					<g fill="none" stroke="#e8e8e8">
						<path d="M107.5 767.5h9v9h-9zM111.5 722v50.5h50" />
						<path d="M96 740.5H1108M1136 740.5H3000M1122.5 202V726M1122.5 755V2000M1108.5 726.5h28v28h-28z" />
					</g>
					<text class="axis" x="119" y="718">Y</text>
					<text class="axis" x="172" y="772">X</text>
				</g>
			</svg>
			<p class="view-label">[−][俯视][二维线框]</p>

			<div class="viewcube">
				<span class="north">北</span>
				<span class="west">西</span>
				<button class="top-face">上</button>
				<span class="east">东</span>
				<span class="south">南</span>
			</div>
			<button class="wcs">WCS</button>

			<div class="navbar">
				<svg width="32" height="212" viewBox="0 0 32 212" fill="none" stroke="#2a2a2a" stroke-width="1.1" aria-hidden="true">
					<circle cx="26" cy="5" r="3" />
					<path d="M6 22c5-4 13-5 20-2v11c-3 11-16 12-20 2-2-4-2-8 0-11z" />
					<circle cx="16" cy="29" r="6" />
					<path d="M13 29a3 3 0 1 1 3 3M14 50h5l-2 2zM3 56h26" />
					<path d="M9 82l-4-8 2-1 4 4-2-12h2l3 9-1-12h2l2 12 2-11h2v12l3-8 2 1-3 12-4 5H12z" />
					<path d="M6 92l14 14M21 92L6 107M4 91l4 2M23 91l-4 2" />
					<circle cx="20" cy="104" r="5" />
					<path d="M24 108l4 4" stroke-width="2.5" />
					<path d="M14 119h5l-2 2zM14 158h5l-2 2z" />
					<path d="M13 130h5v20h-5zM12 134c-12 3-9 9 7 10M19 134c13 3 8 9-1 9M15 127v3M10 141l-4 4" />
					<path d="M3 164h26M4 169h24v7H4zM12 169v7M20 169v7M4 179h16v13H4z" />
					<path d="M9 182l6 4-6 4z" fill="#2a2a2a" />
					<circle cx="26" cy="206" r="3" />
				</svg>
			</div>

			<div class="command">
				<span class="grip"></span>
				<button aria-label="关闭命令行"><svg width="10" height="10" viewBox="0 0 10 10"><path d="M1 1l8 8M9 1L1 9" stroke="#ccc" stroke-width="1.8" /></svg></button>
				<button aria-label="自定义">{@render icon('wrench')}</button>
				<label>
					{@render icon('prompt')}
					<i class="caret small dark"></i>
					<input bind:value={command} placeholder="键入命令" aria-label="键入命令" />
				</label>
			</div>
		</div>
	</main>

	<div class="layout-row">
		<button class="layout-tab current">模型</button>
		<button class="layout-tab">布局1</button>
		<button class="layout-tab">布局2</button>
		<button class="layout-tab add" aria-label="新建布局">+</button>
		<button class="scale">比例 1:100 <i class="caret"></i></button>
	</div>

	<footer class="status">
		<output class="coords">-17515, 44343, 0</output>
		{#each status as group}
			<div class="status-group" class:stretch={group.some((item) => item.units)}>
				{#each group as item}
					{#if item.units}
						<div class="combo units"><select aria-label="单位"><option>小数</option></select></div>
					{:else}
						<button class:words={item.text} class:sep={item.sep} class:tight={item.tight} aria-label={item.label} aria-pressed={item.on}>
							{#if item.icon}<span class="pic">{@render icon(item.icon)}</span>{/if}
							{#if item.text}<span>{item.text}</span>{/if}
							{#if item.arrow}<i class="caret"></i>{/if}
						</button>
					{/if}
				{/each}
			</div>
		{/each}
	</footer>

	<svg class="brand" width="246" height="116" viewBox="0 0 246 116" role="img" aria-label="Baidu 经验">
		<g fill="#fff">
			<ellipse cx="91" cy="31" rx="9" ry="12" />
			<ellipse cx="108" cy="14" rx="8" ry="12" />
			<ellipse cx="129" cy="15" rx="9" ry="12" transform="rotate(10 129 15)" />
			<ellipse cx="142" cy="38" rx="9" ry="11" />
			<path d="M116 34c8 0 12 8 18 15 8 8 13 14 10 22-3 11-14 8-28 8s-25 3-29-8c-2-8 3-14 11-22 6-7 10-15 18-15z" />
			<text class="brand-big" x="0" y="77">Bai</text>
			<text class="brand-cn" x="155" y="73">经验</text>
			<text class="brand-url" x="0" y="109">jingyan.baidu.com</text>
		</g>
		<text class="brand-du" x="97" y="72">du</text>
	</svg>
</div>

<style>
	:global(body) {
		margin: 0;
		background: #20262f;
	}

	.defs {
		position: absolute;
	}

	.window {
		position: relative;
		display: flex;
		flex-direction: column;
		box-sizing: border-box;
		height: 100vh;
		min-height: 600px;
		padding: 0 8px 8px;
		border-radius: 8px;
		overflow: hidden;
		background: linear-gradient(#435066 0, #26364d 14px, #6f90b6 20px, #c4dcf5 31px, #e4eefa 230px, #a9c6e2 234px, #a9c6e2);
		box-shadow: inset 0 0 0 1px #28303c, inset 0 0 0 2px #e6f2fc;
		color: #e4e4e4;
		font-family: 'Open Sans', 'Noto Sans CJK SC', sans-serif;
		font-size: 12px;
		line-height: 16px;
	}

	button,
	select,
	input {
		margin: 0;
		padding: 0;
		border: 0;
		background: none;
		color: inherit;
		font: inherit;
		border-radius: 0;
	}

	button {
		display: inline-flex;
		align-items: center;
		justify-content: center;
		white-space: nowrap;
	}

	h1,
	h2,
	p,
	ul {
		margin: 0;
		padding: 0;
		font: inherit;
		list-style: none;
	}

	.icon {
		flex: none;
		display: block;
	}

	.caret {
		flex: none;
		width: 0;
		height: 0;
		border: 4px solid transparent;
		border-top: 4px solid #f2f2f2;
		border-bottom: 0;
	}

	.caret.small {
		border-width: 3px 3px 0;
	}

	.caret.dark {
		border-top-color: #333;
	}

	.header {
		display: grid;
		grid-template-columns: 40px minmax(0, 1fr);
		grid-template-rows: 32px 21px;
	}

	.app-button {
		grid-row: 1 / 3;
		align-self: end;
		gap: 1px;
		height: 40px;
		margin-bottom: 4px;
		border: 1px solid #111;
		background: linear-gradient(#d5d5d5, #858585 60%, #9c9c9c);
	}

	.titlebar {
		display: flex;
		align-items: flex-end;
	}

	.quick,
	.info {
		display: flex;
		align-items: center;
		height: 22px;
		margin-bottom: 1px;
		background: linear-gradient(#a2a2a2, #808080);
	}

	.quick {
		width: 459px;
		padding-left: 8px;
	}

	.quick > button {
		width: 24px;
	}

	.quick > .narrow {
		width: 17px;
	}

	.quick-arrow {
		margin: 0 3px;
	}

	.faded {
		opacity: 0.6;
	}

	.combo {
		position: relative;
		display: flex;
		align-items: center;
		box-sizing: border-box;
		height: 22px;
		border: 1px solid #2d2d2d;
		background: linear-gradient(#515151, #676767);
	}

	.combo::after {
		content: '';
		position: absolute;
		right: 4px;
		top: 8px;
		border: 4px solid transparent;
		border-top-color: #f2f2f2;
		border-bottom: 0;
		pointer-events: none;
	}

	.combo select {
		flex: 1;
		min-width: 0;
		height: 100%;
		appearance: none;
		outline: 0;
	}

	.workspace {
		flex: 1;
		gap: 2px;
		padding-left: 3px;
		background: #5e5e5e;
	}

	h1 {
		flex: 1;
		padding: 0 0 7px 14px;
		text-align: center;
		color: #0c0c0c;
	}

	.info {
		width: 445px;
	}

	.play {
		margin: 0 5px;
		border: 3px solid transparent;
		border-left: 4px solid #fff;
		border-right: 0;
	}

	.info input {
		box-sizing: border-box;
		width: 180px;
		height: 22px;
		padding-left: 4px;
		border: 1px solid #333;
		background: #777;
		font-style: italic;
	}

	input::placeholder {
		color: #ccc;
		opacity: 1;
	}

	.info > button {
		width: 24px;
	}

	.info > .login {
		flex: 1;
		justify-content: flex-start;
		gap: 5px;
		padding: 0 8px 0 4px;
	}

	.login .caret {
		margin-left: auto;
	}

	.info > .with-arrow {
		gap: 3px;
		width: 34px;
		margin-right: 10px;
	}

	.info > .help {
		gap: 6px;
		width: 36px;
	}

	.help span {
		width: 14px;
		height: 14px;
		border: 1px solid #445;
		border-radius: 50%;
		background: #f1f5fa;
		color: #1d3a66;
		font-weight: 700;
		line-height: 14px;
	}

	.controls {
		display: flex;
		align-self: flex-start;
		margin: 1px 1px 0 22px;
		border: 1px solid #c8d4e2;
		border-top: 0;
		border-radius: 0 0 5px 5px;
		overflow: hidden;
		background: linear-gradient(#9aa8b8, #5a6674 50%, #7d8da0);
	}

	.controls button {
		width: 27px;
		height: 17px;
		border-right: 1px solid #c8d4e2;
	}

	.controls .close {
		width: 45px;
		border: 0;
		background: linear-gradient(#e09a8c, #bb3322 50%, #d25a3c);
	}

	.menubar {
		display: flex;
		gap: 25px;
		padding-left: 15px;
		border-top: 1px solid #3a3a3a;
		background: linear-gradient(#959595, #757575 50%, #505050);
		color: #f4f4f4;
	}

	.doc-controls {
		display: flex;
		gap: 6px;
		margin: 0 4px 0 auto;
	}

	.ribbon-tabs {
		display: flex;
		height: 20px;
		padding-left: 4px;
		border-top: 1px solid #333;
		background: #515151;
		color: #d0d0d0;
	}

	.ribbon-tabs button {
		padding: 1px 10px 0;
	}

	.ribbon-tabs .active {
		padding: 0 8px;
		margin-right: 1px;
		border: 1px solid #777;
		border-bottom: 0;
		background: linear-gradient(#787878, #5b5b5b);
		color: #fff;
	}

	.ribbon-tabs .minimize {
		gap: 6px;
		margin-left: 12px;
	}

	.ribbon {
		display: grid;
		grid-template-columns: 212fr 163fr 126fr 252fr 80fr 201fr 68fr 76fr 76fr 61fr 11fr;
		border-bottom: 1px solid #8a8a8a;
		background: #595959;
		color: #ededed;
	}

	.panel {
		display: flex;
		flex-direction: column;
		min-width: 0;
		border-right: 1px solid #454545;
		box-shadow: 1px 0 #6a6a6a;
	}

	.rest {
		background: #4b4b4b;
	}

	.body {
		display: flex;
		box-sizing: border-box;
		height: 79px;
		padding: 4px 0 0 1px;
	}

	.draw {
		padding-left: 3px;
	}

	.draw .col {
		margin-left: 7px;
	}

	.modify {
		gap: 8px;
		padding-left: 4px;
	}

	.annotate,
	.roomy {
		padding-left: 5px;
	}

	.view {
		justify-content: center;
	}

	.big {
		flex: none;
		flex-direction: column;
		justify-content: flex-start;
		width: 40px;
		line-height: 17px;
	}

	.big > .pic {
		display: flex;
		align-items: center;
		height: 38px;
	}

	.annotate .big {
		width: 42px;
	}

	.letter {
		height: 38px;
		font-family: 'Liberation Sans', sans-serif;
		font-size: 38px;
		line-height: 38px;
	}

	.big .caret {
		margin-top: 2px;
	}

	.tool {
		display: flex;
		justify-content: flex-start;
		height: 24px;
	}

	.tool .pic {
		display: flex;
		justify-content: center;
		width: 22px;
	}

	.tool .label {
		padding-left: 2px;
	}

	.tool .caret {
		margin-left: 4px;
	}

	.pressed {
		box-shadow: inset 0 0 0 1px #1f3c6c;
		background: linear-gradient(#4a6ca6, #6a90c6);
	}

	.layers {
		flex: 1;
		padding: 1px 3px 0 0;
	}

	.layer {
		gap: 3px;
		padding-left: 3px;
	}

	.layer svg {
		flex: none;
	}

	.layer-grid {
		display: grid;
		grid-template-columns: repeat(5, 24px);
		grid-auto-rows: 24px;
	}

	.bylayer {
		display: grid;
		flex: 1;
		align-content: start;
		gap: 2px;
		padding: 1px 2px 0 0;
	}

	.bylayer .combo {
		justify-content: flex-end;
		gap: 1px;
	}

	.bylayer select {
		flex: none;
		width: 66px;
	}

	.swatch {
		width: 16px;
		height: 16px;
		margin: 0 8px 0 11px;
		background: #fff;
	}

	.swatch + select {
		flex: 1;
	}

	.sample {
		flex: 1;
		height: 1px;
		margin-left: 5px;
		background: #eee;
	}

	.foot {
		position: relative;
		display: flex;
		align-items: center;
		justify-content: center;
		gap: 7px;
		height: 18px;
		background: linear-gradient(#484848, #525252);
	}

	.with-launcher {
		padding-right: 12px;
	}

	.launcher {
		position: absolute;
		right: 4px;
		bottom: 5px;
	}

	.file-tabs {
		display: flex;
		align-items: flex-end;
		height: 28px;
		padding-left: 20px;
		border-bottom: 2px solid #585858;
		background: linear-gradient(#343434, #3b3b3b);
	}

	.file-tab {
		justify-content: flex-start;
		box-sizing: border-box;
		width: 126px;
		height: 24px;
		padding: 0 12px;
		border-radius: 12px 14px 0 0;
		background: linear-gradient(#545454, #4a4a4a);
		clip-path: polygon(0 100%, 8px 0, 118px 0, 100% 100%);
		color: #a8a8a8;
	}

	.file-tab.current {
		justify-content: space-between;
		padding: 0 16px 0 9px;
		background: linear-gradient(#818181, #5c5c5c);
		color: #fff;
	}

	.x {
		color: #333;
		font-size: 16px;
	}

	.add-tab {
		width: 23px;
		height: 16px;
		margin: 0 0 4px 3px;
		border-radius: 4px 10px 4px 8px;
		background: #575757;
		color: #ddd;
		font-size: 18px;
	}

	.workspace-area {
		display: flex;
		flex: 1;
		min-height: 0;
		background: #5a5a5a;
	}

	.palette {
		display: flex;
		flex-direction: column;
		width: 86px;
		margin-right: 2px;
		padding-bottom: 4px;
	}

	.palette h2 {
		padding: 4px 0 8px 15px;
		border-radius: 5px;
		background: #484848;
		color: #eee;
	}

	.palette-list {
		flex: 1;
		min-height: 0;
		padding-top: 3px;
		overflow: hidden;
		background: #f0f0f0;
		color: #111;
	}

	.palette-list ul + ul {
		margin-top: 1px;
		padding-top: 3px;
		border-top: 1px solid #9a9a9a;
	}

	.palette-list li {
		height: 18px;
	}

	.palette-list button {
		display: flex;
		gap: 9px;
		height: 18px;
		padding-left: 3px;
	}

	.palette-list .label {
		white-space: pre;
	}

	.palette-list .pic {
		position: relative;
	}

	.palette-list small {
		position: absolute;
		top: -2px;
		left: 1px;
		font-size: 8px;
		line-height: 12px;
	}

	.canvas {
		position: relative;
		flex: 1;
		min-width: 0;
		overflow: hidden;
		background: #000;
	}

	.plan {
		position: absolute;
		inset: 0;
	}

	.cad {
		fill: #e4e4e4;
		font-family: 'Roboto Condensed', 'Liberation Sans Narrow', 'Lato', sans-serif;
		font-size: 20px;
		font-weight: 300;
		text-anchor: middle;
	}

	.axis {
		fill: #e4e4e4;
		font-family: 'Open Sans', sans-serif;
		font-size: 20px;
		font-weight: 300;
		text-anchor: middle;
	}

	.view-label {
		position: absolute;
		top: 6px;
		left: 4px;
		font-family: 'Liberation Sans', 'Noto Sans CJK SC', sans-serif;
		color: #f0f0f0;
	}

	.viewcube {
		position: absolute;
		top: 18px;
		right: 19px;
		box-sizing: border-box;
		width: 100px;
		height: 100px;
		border: 12px solid #2a2a2a;
		border-radius: 50%;
		color: #b0b0b0;
		font-size: 15px;
	}

	.viewcube > * {
		position: absolute;
		line-height: 16px;
	}

	.north {
		top: -15px;
		left: 30px;
	}

	.south {
		bottom: -15px;
		left: 30px;
	}

	.west {
		top: 31px;
		left: -16px;
	}

	.east {
		top: 31px;
		right: -16px;
	}

	.top-face {
		top: 17px;
		left: 17px;
		width: 42px;
		height: 42px;
		background: #a6a6a6;
		color: #3c4250;
		font-size: 26px;
	}

	.wcs {
		position: absolute;
		top: 140px;
		right: 46px;
		justify-content: flex-start;
		box-sizing: border-box;
		width: 47px;
		height: 17px;
		padding-left: 4px;
		border: 1px solid #77757f;
		border-radius: 4px;
		background: #8d8b95;
		color: #3e3d45;
		font-family: 'Liberation Sans', sans-serif;
		font-size: 11px;
	}

	.navbar {
		position: absolute;
		top: 183px;
		right: 4px;
		height: 212px;
		border-radius: 4px;
		background: #434343;
	}

	.command {
		position: absolute;
		bottom: 0;
		left: 20%;
		display: flex;
		width: 60%;
		height: 26px;
		background: linear-gradient(#555, #2d2d2d);
	}

	.command button {
		width: 22px;
	}

	.grip {
		width: 6px;
		margin: 4px 1px 4px 3px;
		background: repeating-linear-gradient(#888 0 1px, #333 1px 3px);
	}

	.command label {
		display: flex;
		flex: 1;
		align-items: center;
		gap: 4px;
		padding-left: 4px;
		background: #b2b2b2;
	}

	.command input {
		flex: 1;
		margin-left: 2px;
		color: #333;
	}

	.command input::placeholder {
		color: #707070;
		font-style: italic;
	}

	.layout-row {
		display: flex;
		align-items: flex-start;
		height: 29px;
		padding-left: 10px;
		background: #383838;
		color: #a4a4a4;
	}

	.layout-tab {
		width: 54px;
		height: 19px;
		border-radius: 0 0 10px 10px;
		background: linear-gradient(#454545, #585858);
		clip-path: polygon(0 0, 100% 0, 90% 100%, 10% 100%);
	}

	.layout-tab.current {
		width: 49px;
		background: linear-gradient(#6b6b6b, #929292);
		color: #fff;
		font-weight: 700;
	}

	.layout-tab.add {
		width: 28px;
		height: 18px;
		color: #ddd;
		font-size: 16px;
	}

	.scale {
		gap: 3px;
		width: 76px;
		height: 26px;
		margin-left: auto;
		border: 1px solid #777;
		background: #404040;
		color: #fff;
	}

	.status {
		display: flex;
		gap: 1px;
		height: 27px;
		padding-left: 37px;
		background: #383838;
	}

	.coords,
	.status-group {
		display: flex;
		box-sizing: border-box;
		border: 1px solid #7a7a7a;
		background: #4f4f4f;
	}

	.coords {
		align-items: center;
		justify-content: flex-end;
		width: 143px;
		padding-right: 6px;
		color: #b4b4b4;
		white-space: nowrap;
	}

	.status-group.stretch {
		flex: 1;
	}

	.status-group button .pic {
		display: flex;
		justify-content: center;
		width: 25px;
	}

	.status-group button .caret {
		margin: 0 3px;
	}

	.status-group .sep {
		box-shadow: -1px 0 #7a7a7a;
	}

	.status-group .tight .pic {
		width: 24px;
	}

	.status-group .words {
		padding: 0 1px;
		color: #fff;
	}

	.units {
		flex: 1;
		height: auto;
		padding-left: 4px;
		border: 0;
		background: none;
		font-weight: 700;
	}

	.units::after {
		top: 10px;
	}

	.brand {
		position: absolute;
		right: 66px;
		bottom: 28px;
		opacity: 0.7;
		pointer-events: none;
	}

	.brand-big {
		font: 700 52px 'Liberation Sans', sans-serif;
	}

	.brand-cn {
		font: 900 40px 'Noto Sans CJK SC', sans-serif;
	}

	.brand-url {
		font: 400 28px 'Open Sans', sans-serif;
	}

	.brand-du {
		fill: #111;
		font: 700 32px 'Liberation Sans', sans-serif;
	}
</style>
